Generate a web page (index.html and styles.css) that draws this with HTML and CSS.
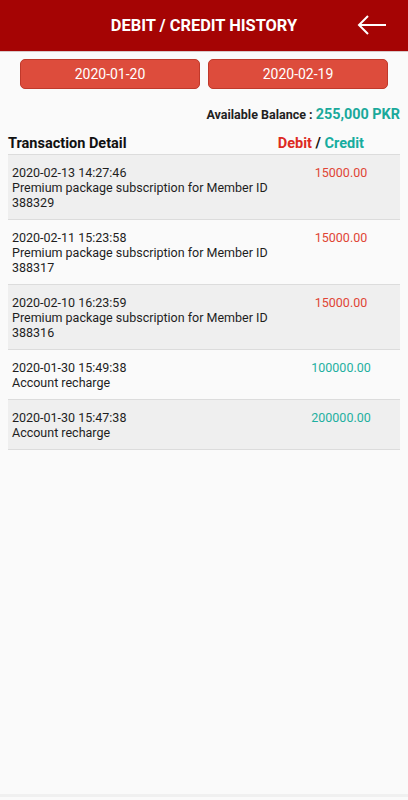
FILE: index.html
```html
<!DOCTYPE html>
<html>
<head>
<meta charset="utf-8">
<link rel="stylesheet" href="styles.css">
</head>
<body>
<div class="app">
  <header class="topbar">
    <h1 class="title">DEBIT / CREDIT HISTORY</h1>
    <svg class="back" width="30" height="20" viewBox="0 0 30 20"><path d="M29 10H2M11 1L2 10l9 9" fill="none" stroke="#fff" stroke-width="2"/></svg>
  </header>
  <div class="dates">
    <button class="date">2020-01-20</button>
    <button class="date">2020-02-19</button>
  </div>
  <div class="balance"><span class="bal-label">Available Balance : </span><span class="bal-value">255,000 PKR</span></div>
  <div class="list-head">
    <span class="lh-title">Transaction Detail</span>
    <span class="lh-type"><span class="red">Debit</span> / <span class="teal">Credit</span></span>
  </div>
  <div class="list">
    <div class="row alt">
      <div class="desc">2020-02-13 14:27:46<br>Premium package subscription for Member ID<br>388329</div>
      <div class="amt debit">15000.00</div>
    </div>
    <div class="row">
      <div class="desc">2020-02-11 15:23:58<br>Premium package subscription for Member ID<br>388317</div>
      <div class="amt debit">15000.00</div>
    </div>
    <div class="row alt">
      <div class="desc">2020-02-10 16:23:59<br>Premium package subscription for Member ID<br>388316</div>
      <div class="amt debit">15000.00</div>
    </div>
    <div class="row">
      <div class="desc">2020-01-30 15:49:38<br>Account recharge</div>
      <div class="amt credit">100000.00</div>
    </div>
    <div class="row alt">
      <div class="desc">2020-01-30 15:47:38<br>Account recharge</div>
      <div class="amt credit">200000.00</div>
    </div>
  </div>
</div>
</body>
</html>
```
FILE: styles.css
```css
* { box-sizing: border-box; }
html, body { margin: 0; padding: 0; }
body {
  background: #fafafa;
  font-family: Roboto, "Liberation Sans", sans-serif;
  color: #1a1a1a;
  width: 408px;
  height: 800px;
  overflow: hidden;
}
.app { height: 797px; border-bottom: 3px solid #f0f0f0; background: #fafafa; }
.topbar {
  height: 52px;
  background: #a50404;
  border-bottom: 1px solid #d8c8c8;
  display: flex;
  align-items: center;
  justify-content: center;
  position: relative;
}
.title {
  margin: 0;
  color: #fff;
  font-size: 16.4px;
  font-weight: 700;
}
.back { position: absolute; right: 21px; top: 15px; }
.dates {
  display: flex;
  gap: 8px;
  padding: 7px 20px 0;
}
.date {
  flex: 1;
  height: 30px;
  background: #dd4c3c;
  border: 1px solid #c0392b;
  border-radius: 5px;
  color: #fff;
  font-family: Roboto, "Liberation Sans", sans-serif;
  font-size: 14px;
  padding: 0;
}
.balance {
  text-align: right;
  padding: 15px 8px 0;
  line-height: 20px;
}
.bal-label { font-size: 12.5px; font-weight: 700; color: #222; }
.bal-value { font-size: 14.4px; font-weight: 700; color: #1aa99b; }
.list-head {
  display: flex;
  justify-content: space-between;
  padding: 9px 44px 0 8px;
  font-size: 14.5px;
  font-weight: 700;
  line-height: 20px;
  color: #111;
}
.red { color: #dd2a22; }
.teal { color: #16ad9f; }
.list { margin: 0 8px 0; }
.row {
  display: flex;
  justify-content: space-between;
  align-items: flex-start;
  padding: 10px 0 9px 4px;
  border-top: 1px solid #dcdcdc;
  font-size: 12.5px;
  line-height: 15px;
  background: #fafafa;
}
.row:last-child { border-bottom: 1px solid #dcdcdc; }
.row.alt { background: #efefef; }
.desc { color: #1e1e1e; }
.amt { width: 64px; text-align: center; margin-right: 27px; }
.debit { color: #e04535; }
.credit { color: #1eb0a0; }
```
